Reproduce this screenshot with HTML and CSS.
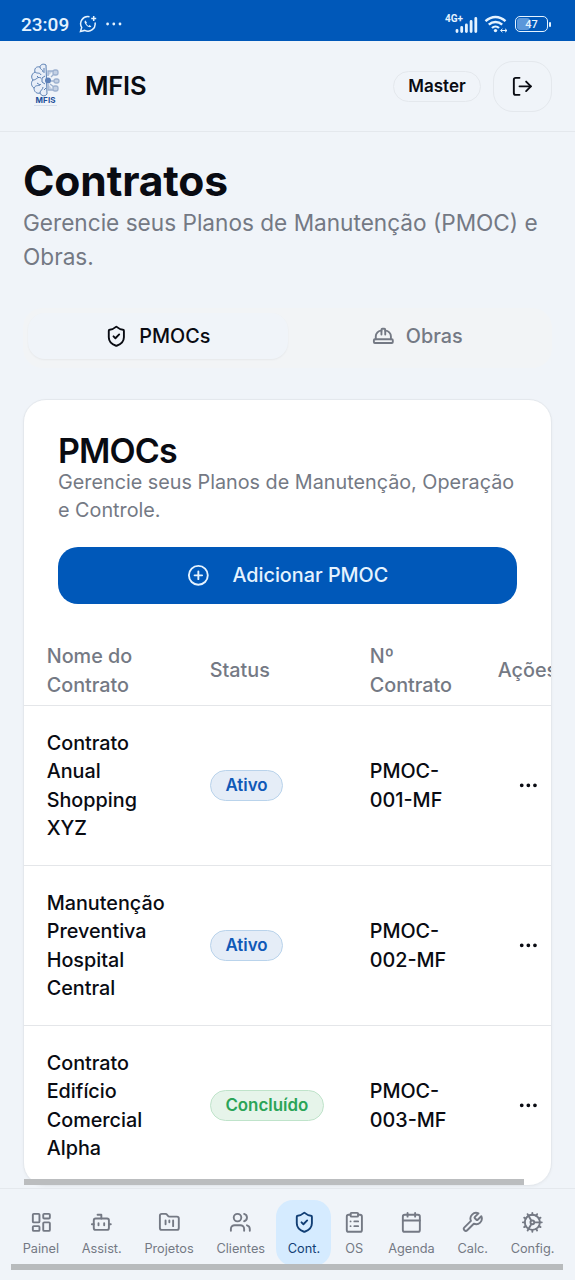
FILE: index.html
```html
<!DOCTYPE html>
<html lang="pt-BR">
<head>
<meta charset="utf-8">
<title>MFIS - Contratos</title>
<link rel="stylesheet" href="styles.css">
</head>
<body>
<svg class="defs" width="0" height="0">
  <symbol id="shield" viewBox="0 0 24 24"><path d="M20 13c0 5-3.500 7.500-7.660 8.950a1 1 0 0 1-.67-.01C7.500 20.500 4 18 4 13V6a1 1 0 0 1 1-1c2 0 4.500-1.200 6.240-2.720a1.170 1.170 0 0 1 1.520 0C14.510 3.810 17 5 19 5a1 1 0 0 1 1 1z"/><path d="m9 12 2 2 4-4"/></symbol>
  <symbol id="dots" viewBox="0 0 24 24"><circle cx="12" cy="12" r="1"/><circle cx="19" cy="12" r="1"/><circle cx="5" cy="12" r="1"/></symbol>
</svg>
<div class="statusbar">
  <span class="clock">23:09</span>
  <svg class="whats" viewBox="0 0 18 18"><path d="M10.500 1.700A7.200 7.200 0 0 0 2.700 12.400L1.500 16.500l4.200-1.100A7.200 7.200 0 0 0 16 7.500"/><path d="M6.200 5.300c-1.300 1.400-.5 3.400 1.300 5.100s3.700 2.400 4.900 1l-1.900-1.300-1 .8c-1-.4-1.900-1.400-2.200-2.300l.7-.9z" class="solid"/><path d="M14.700 1v5M12.200 3.500h5"/></svg>
  <svg class="more" viewBox="0 0 16 4"><circle cx="1.600" cy="2" r="1.400"/><circle cx="7.800" cy="2" r="1.400"/><circle cx="14" cy="2" r="1.400"/></svg>
  <div class="signals">
    <span class="net">4G+</span>
    <svg class="bars" viewBox="0 0 23 16"><path d="M2 15v-1.200M6.700 15v-4M11.400 15V8.500M16.100 15V5M20.800 15V2"/></svg>
    <svg class="wifi" viewBox="0 0 24 18"><path d="M1.500 6.200c6-5.600 14-5.600 20 0M4.800 9.700c4-3.700 9.400-3.700 13.400 0M8 13c2-1.900 5-1.900 7 0"/><circle cx="11.500" cy="15.600" r="1.700"/><path d="M17 15.500h6M18.500 13.800l-2 1.700 2 1.700M21 13.800l2 1.700-2 1.700" class="thin"/></svg>
    <span class="battery"><span class="charge"></span><b>47</b></span><i class="cap"></i>
  </div>
</div>
<header class="header">
  <svg class="logo" viewBox="0 0 32 46">
    <g class="brain"><path d="M16 2c-3-2-6 0-6 2-4-1-6 2-5 5-4 2-4 6-2 8-3 3-1 7 1 8 0 4 3 6 6 5 1 3 5 4 7 1z"/><path d="M10 4c0 3 3 2 3 5M5 9c2 2 5 0 6 3M3 17c4 0 4-4 8-2M4 25c2-4 5-1 7-4M10 30c0-3 3-3 3-6M7 13l2 2M7 20l3 2M14 5v5M15 13l-3 2v4l3 2M14 27l2-2"/></g>
    <g class="circuit"><path d="M18 13V8h5M21 14l3-3M21 18h6M20 21l4 3M18 21v6h5"/><rect x="23" y="7" width="5" height="5" rx="2"/><rect x="24" y="16" width="5" height="4" rx="2"/><rect x="23" y="23" width="5" height="5" rx="2"/></g>
    <circle class="hub" cx="18" cy="17.500" r="3"/>
    <text x="5.500" y="40" class="logotext" textLength="20">MFIS</text><path class="tagline" d="M4 42.500h23"/>
  </svg>
  <span class="brand">MFIS</span>
  <span class="role">Master</span>
  <button class="logout" aria-label="Sair"><svg class="icon" viewBox="0 0 24 24"><path d="M9 21H5a2 2 0 0 1-2-2V5a2 2 0 0 1 2-2h4"/><path d="m16 17 5-5-5-5"/><path d="M21 12H9"/></svg></button>
</header>
<main class="main">
  <h1>Contratos</h1>
  <p class="lead">Gerencie seus Planos de Manutenção (PMOC) e Obras.</p>
  <div class="tabs">
    <button class="tab selected"><svg class="icon"><use href="#shield"/></svg>PMOCs</button>
    <button class="tab"><svg class="icon" viewBox="0 0 24 24"><path d="M10 10V5a1 1 0 0 1 1-1h2a1 1 0 0 1 1 1v5"/><path d="M14 6a6 6 0 0 1 6 6v3"/><path d="M4 15v-3a6 6 0 0 1 6-6"/><rect x="2" y="15" width="20" height="4" rx="1"/></svg>Obras</button>
  </div>
  <section class="card">
    <div class="card-head">
      <h2>PMOCs</h2>
      <p>Gerencie seus Planos de Manutenção, Operação e Controle.</p>
      <button class="add"><svg class="icon" viewBox="0 0 24 24"><circle cx="12" cy="12" r="10"/><path d="M8 12h8M12 8v8"/></svg>Adicionar PMOC</button>
    </div>
    <div class="table">
      <div class="row thead"><span>Nome do Contrato</span><span>Status</span><span>Nº Contrato</span><span>Ações</span></div>
      <div class="row"><span>Contrato Anual Shopping XYZ</span><span><em class="badge">Ativo</em></span><span>PMOC-<br>001-MF</span><span class="act"><svg class="icon"><use href="#dots"/></svg></span></div>
      <div class="row"><span>Manutenção Preventiva Hospital Central</span><span><em class="badge">Ativo</em></span><span>PMOC-<br>002-MF</span><span class="act"><svg class="icon"><use href="#dots"/></svg></span></div>
      <div class="row"><span>Contrato Edifício Comercial Alpha</span><span><em class="badge done">Concluído</em></span><span>PMOC-<br>003-MF</span><span class="act"><svg class="icon"><use href="#dots"/></svg></span></div>
    </div>
  </section>
  <div class="table-scroll"></div>
</main>
<nav class="nav">
  <a class="item"><svg class="icon" viewBox="0 0 24 24"><rect x="3" y="3" width="7" height="9" rx="1"/><rect x="14" y="3" width="7" height="5" rx="1"/><rect x="14" y="12" width="7" height="9" rx="1"/><rect x="3" y="16" width="7" height="5" rx="1"/></svg>Painel</a>
  <a class="item"><svg class="icon" viewBox="0 0 24 24"><path d="M12 8V4H8"/><rect x="4" y="8" width="16" height="12" rx="2"/><path d="M2 14h2M20 14h2M15 13v2M9 13v2"/></svg>Assist.</a>
  <a class="item"><svg class="icon" viewBox="0 0 24 24"><path d="M4 20h16a2 2 0 0 0 2-2V8a2 2 0 0 0-2-2h-7.930a2 2 0 0 1-1.660-.9l-.82-1.200A2 2 0 0 0 7.930 3H4a2 2 0 0 0-2 2v13c0 1.100.9 2 2 2Z"/><path d="M8 10v4M12 10v2M16 10v6"/></svg>Projetos</a>
  <a class="item"><svg class="icon" viewBox="0 0 24 24"><path d="M16 21v-2a4 4 0 0 0-4-4H6a4 4 0 0 0-4 4v2"/><circle cx="9" cy="7" r="4"/><path d="M22 21v-2a4 4 0 0 0-3-3.870M16 3.130a4 4 0 0 1 0 7.750"/></svg>Clientes</a>
  <a class="item current"><svg class="icon"><use href="#shield"/></svg>Cont.</a>
  <a class="item"><svg class="icon" viewBox="0 0 24 24"><rect x="8" y="2" width="8" height="4" rx="1"/><path d="M16 4h2a2 2 0 0 1 2 2v14a2 2 0 0 1-2 2H6a2 2 0 0 1-2-2V6a2 2 0 0 1 2-2h2M12 11h4M12 16h4M8 11h.01M8 16h.01"/></svg>OS</a>
  <a class="item"><svg class="icon" viewBox="0 0 24 24"><path d="M8 2v4M16 2v4M3 10h18"/><rect x="3" y="4" width="18" height="18" rx="2"/></svg>Agenda</a>
  <a class="item"><svg class="icon" viewBox="0 0 24 24"><path d="M14.700 6.300a1 1 0 0 0 0 1.400l1.600 1.600a1 1 0 0 0 1.400 0l3.770-3.770a6 6 0 0 1-7.940 7.940l-6.910 6.910a2.120 2.120 0 0 1-3-3l6.910-6.910a6 6 0 0 1 7.940-7.940l-3.760 3.760z"/></svg>Calc.</a>
  <a class="item"><svg class="icon" viewBox="0 0 24 24"><path d="M12 20a8 8 0 1 0 0-16 8 8 0 0 0 0 16Z"/><path d="M12 14a2 2 0 1 0 0-4 2 2 0 0 0 0 4ZM12 2v2M12 22v-2M17 20.660l-1-1.730M11 10.270 7 3.340M20.660 17l-1.730-1M3.340 7l1.730 1M14 12h8M2 12h2M20.660 7l-1.730 1M3.340 17l1.730-1M17 3.340l-1 1.730M11 13.730l-4 6.930"/></svg>Config.</a>
  <div class="nav-scroll"></div>
</nav>
</body>
</html>
```
FILE: styles.css
```css
* { box-sizing: border-box; }
body { margin: 0; width: 575px; height: 1280px; overflow: hidden; display: flex; flex-direction: column; background: #f0f4f9; color: #090b12; font-family: Inter, "Liberation Sans", sans-serif; font-size: 19.8px; line-height: 28.4px; }
.defs { position: absolute; }
button { font: inherit; color: inherit; border: 0; background: none; padding: 0; }
h1, h2, p { margin: 0; }
.icon { width: 22.700px; height: 22.700px; fill: none; stroke: currentColor; stroke-width: 2; stroke-linecap: round; stroke-linejoin: round; flex: none; }

.statusbar { height: 41px; flex: none; background: #0058b9; color: #e5f3ff; display: flex; align-items: center; padding: 8px 25px 0 21px; }
.clock { font: 500 19px/24px Roboto, sans-serif; width: 58px; letter-spacing: 0; }
.whats { width: 18px; height: 18px; fill: none; stroke: currentColor; stroke-width: 1.500; position: relative; top: -1px; }
.solid { fill: currentColor; stroke: none; }
.more { width: 16px; height: 4px; margin-left: 9px; fill: currentColor; position: relative; top: -1px; }
.signals { margin-left: auto; display: flex; align-items: center; margin-top: -1px; }
.net { font: 700 10px/8px Roboto, sans-serif; align-self: flex-start; margin-right: -8px; }
.bars { width: 23px; height: 17px; fill: none; stroke: currentColor; stroke-width: 2.800; stroke-linecap: round; }
.wifi { width: 24px; height: 18px; margin: 0 7px 0 6px; fill: none; stroke: currentColor; stroke-width: 2.400; }
.wifi circle { fill: currentColor; stroke: none; }
.wifi .thin { stroke-width: 1; }
.battery { position: relative; width: 33px; height: 16px; border: 1.500px solid currentColor; border-radius: 5px; display: grid; place-items: center; font: 11px/12px Roboto, sans-serif; }
.battery b { position: relative; font-weight: 500; top: .5px; }
.charge { position: absolute; left: 1px; top: 1px; width: 13px; height: 12px; background: #5b97da; border-radius: 3px; }
.cap { width: 2px; height: 5px; margin-left: 1px; margin-right: -1px; background: currentColor; border-radius: 1px; }

.header { height: 91px; flex: none; display: flex; align-items: center; padding: 1px 23px 0 30px; border-bottom: 1px solid #e4e8ed; }
.logo { width: 32px; height: 46px; margin-top: -1px; }
.brain { fill: #e8eef8; stroke: #5b80b3; stroke-width: 1; }
.circuit { fill: #c3d0e4; stroke: #9db1cf; stroke-width: 1.300; }
.hub { fill: #5d80b8; }
.logotext { font: 700 8px Inter, sans-serif; fill: #1e509b; }
.tagline { stroke: #cfd8e6; stroke-width: .8; }
.brand { font-size: 25.500px; font-weight: 600; letter-spacing: -.2px; margin-left: 23px; }
.role { margin-left: auto; width: 88px; height: 31px; border: 1px solid #e4e8ed; border-radius: 16px; font-size: 17px; font-weight: 600; line-height: 29px; text-align: center; }
.logout { margin-left: 12px; width: 59px; height: 51px; border: 1px solid #e4e8ed; border-radius: 20px; display: grid; place-items: center; }

.main { height: 1056px; flex: none; padding: 23px 23px 0; }
h1 { font-size: 42.600px; line-height: 51px; font-weight: 700; letter-spacing: -.150px; }
.lead { font-size: 22.620px; line-height: 34px; color: #747984; }
.tabs { margin-top: 34px; height: 60px; display: grid; grid-template-columns: 1fr 1fr; padding: 5px; background: #f2f4f6; border-radius: 20px; color: #747984; font-weight: 500; }
.tab { display: flex; justify-content: center; align-items: center; gap: 11.400px; height: 46px; }
.selected { background: #f0f4f9; color: #090b12; border-radius: 17px; box-shadow: 0 1px 2px rgba(0,0,0,.05); }
.card { margin-top: 31px; height: 787px; border: 1px solid #e4e8ed; border-radius: 23px; background: #fff; overflow: hidden; box-shadow: 0 1px 3px rgba(0,0,0,.04); }
.card-head { padding: 34px 34px 32px; }
h2 { font-size: 34px; line-height: 34px; font-weight: 600; letter-spacing: -.850px; }
.card-head p { color: #747984; }
.add { margin-top: 22px; width: 100%; height: 57px; border-radius: 20px; background: #0058b9; color: #e5f3ff; font-weight: 500; display: flex; align-items: center; justify-content: center; gap: 23px; }
.table { width: 575px; }
.row { display: grid; grid-template-columns: 163px 160px 128px 110px; height: 160px; align-items: center; border-top: 1px solid #e4e6e9; font-weight: 500; }
.row > span { padding-left: 22.700px; padding-right: 22.700px; }
.thead { height: 69.400px; border-top: 0; color: #747984; }
.row .act { padding-left: 42px; height: 23px; display: flex; }
.badge { display: inline-block; height: 31px; padding: 0 14.700px; border: 1px solid #b9d3eb; border-radius: 16px; background: #e5edf7; color: #0f59b7; font-size: 16.900px; font-weight: 600; font-style: normal; line-height: 29px; vertical-align: middle; }
.done { color: #2ba458; background: #e6f4ea; border-color: #bfe3ca; }
.table-scroll { position: relative; margin-top: -7px; margin-left: 1px; width: 500px; height: 6px; background: #bbbdbf; }

.nav { position: relative; height: 92px; flex: none; background: #f0f4f9; border-top: 1px solid #e4e8ed; display: flex; padding: 11px 0 0 11.300px; }
.item { height: 66px; flex: none; display: flex; flex-direction: column; align-items: center; padding: 11px 11.350px 0; color: #747984; font-size: 12.750px; line-height: 18px; gap: 6px; border-radius: 17px; }
.current { background: #d5ebff; color: #123f75; }
.nav-scroll { position: absolute; left: 11px; top: 75px; width: 552px; height: 6px; background: #b8bbbd; }
```
